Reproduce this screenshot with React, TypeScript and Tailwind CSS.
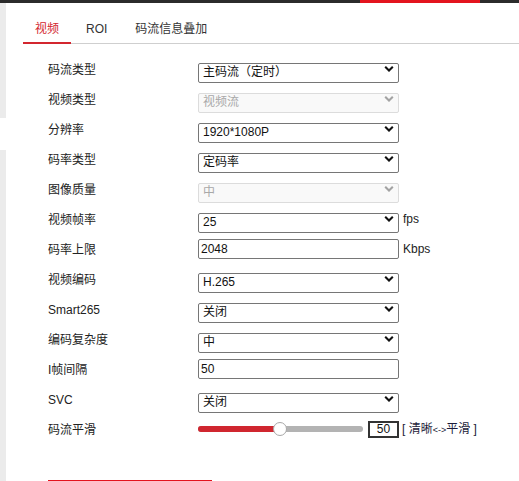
import React, { useState } from 'react';

const FONT = "font-['Liberation_Sans','Noto_Sans_CJK_SC',sans-serif]";

function Chevron({ muted }: { muted?: boolean }) {
  return (
    <svg
      width="10"
      height="7"
      viewBox="0 0 10 7"
      className="pointer-events-none absolute right-[5px] top-1/2 -translate-y-1/2"
    >
      <path
        d="M1.2 1.3 L5 5 L8.8 1.3"
        fill="none"
        stroke={muted ? '#a3a3a3' : '#111'}
        strokeWidth="2.1"
      />
    </svg>
  );
}

function Select({ value, options, disabled }: { value: string; options?: string[]; disabled?: boolean }) {
  const [val, setVal] = useState(value);
  const opts = options ?? [value];
  return (
    <div className="relative w-[201px] h-[20px]">
      <select
        disabled={disabled}
        value={val}
        onChange={(e) => setVal(e.target.value)}
        className={`appearance-none w-full h-full rounded-[2px] border pl-[4px] pr-[18px] pb-[2px] text-[12px] leading-[16px] outline-none ${
          disabled
            ? 'border-[#dcdcdc] bg-[#f9f9f9] text-[#a8a8a8]'
            : 'border-[#767676] bg-white text-[#111]'
        }`}
      >
        {opts.map((o) => (
          <option key={o} value={o}>
            {o}
          </option>
        ))}
      </select>
      <Chevron muted={disabled} />
    </div>
  );
}

function TextInput({ value }: { value: string }) {
  const [val, setVal] = useState(value);
  return (
    <input
      type="text"
      value={val}
      onChange={(e) => setVal(e.target.value)}
      className="w-[201px] h-[20px] rounded-[2px] border border-[#767676] bg-white pl-[2px] pb-[1px] text-[12px] text-[#111] outline-none"
    />
  );
}

function Row({ label, children }: { label: string; children: React.ReactNode }) {
  return (
    <div className="flex h-[30px] items-center">
      <div className="w-[150px] pt-[2px] text-[12px] leading-[16px] text-[#222]">{label}</div>
      <div className="flex items-center">{children}</div>
    </div>
  );
}

export default function App() {
  const [tab, setTab] = useState(0);
  const tabs = ['视频', 'ROI', '码流信息叠加'];

  return (
    <div className={`w-[519px] h-[481px] overflow-hidden bg-white ${FONT}`}>
      {/* top bar */}
      <div className="h-[3px] bg-[#2b2b2b]">
        <div className="ml-[360px] w-[120px] h-full bg-[#e3141e]" />
      </div>

      <div className="flex h-[478px]">
        {/* left edge */}
        <div className="w-[6px] flex flex-col">
          <div className="h-[115px] bg-[#ebebeb]" />
          <div className="h-[32px]" />
          <div className="flex-1 bg-[#ebebeb]" />
        </div>

        <div className="flex-1 pl-[17px]">
          {/* tabs */}
          <div className="mt-[16px] flex border-b border-[#cfcfcf]">
            {tabs.map((t, i) => (
              <button
                key={t}
                onClick={() => setTab(i)}
                className={`-mb-px flex h-[25px] items-start pt-[1px] text-[12px] leading-[18px] ${
                  i === 0 ? 'w-[48px] justify-center' : i === 1 ? 'ml-[15px]' : 'ml-[28px]'
                } ${
                  tab === i
                    ? 'border-b-2 border-[#d3262f] text-[#d3262f]'
                    : 'border-b-2 border-transparent text-[#333]'
                }`}
              >
                {t}
              </button>
            ))}
          </div>

          {/* form */}
          <div className="mt-[10px] pl-[25px]">
            <Row label="码流类型">
              <Select value="主码流（定时）" options={['主码流（定时）', '子码流', '第三码流']} />
            </Row>
            <Row label="视频类型">
              <Select value="视频流" disabled />
            </Row>
            <Row label="分辨率">
              <Select value="1920*1080P" options={['1920*1080P', '1280*720P']} />
            </Row>
            <Row label="码率类型">
              <Select value="定码率" options={['定码率', '变码率']} />
            </Row>
            <Row label="图像质量">
              <Select value="中" disabled />
            </Row>
            <Row label="视频帧率">
              <Select value="25" options={['25', '20', '15', '10']} />
              <span className="ml-[4px] text-[12px] text-[#222]">fps</span>
            </Row>
            <Row label="码率上限">
              <TextInput value="2048" />
              <span className="ml-[4px] text-[12px] text-[#222]">Kbps</span>
            </Row>
            <Row label="视频编码">
              <Select value="H.265" options={['H.265', 'H.264']} />
            </Row>
            <Row label="Smart265">
              <Select value="关闭" options={['关闭', '开启']} />
            </Row>
            <Row label="编码复杂度">
              <Select value="中" options={['低', '中', '高']} />
            </Row>
            <Row label="I帧间隔">
              <TextInput value="50" />
            </Row>
            <Row label="SVC">
              <Select value="关闭" options={['关闭', '开启']} />
            </Row>
            <Row label="码流平滑">
              <div className="relative w-[165px] h-[6px] rounded-full bg-[#b3b3b3]">
                <div className="w-[82px] h-full rounded-full bg-[#d0262f]" />
                <div className="absolute left-[75px] top-1/2 -translate-y-1/2 w-[14px] h-[14px] rounded-full border border-[#a8a8a8] bg-white" />
              </div>
              <div className="ml-[5px] w-[31px] h-[17px] border-2 border-[#333] text-center text-[12px] leading-[13px] text-[#111]">
                50
              </div>
              <span className="ml-[3px] text-[12px] text-[#1c1c3a]">
                [ 清晰<span className="text-[9px]">&lt;-&gt;</span>平滑 ]
              </span>
            </Row>

            <button aria-label="保存" className="mt-[36px] block w-[164px] h-[30px] bg-[#e3141e]" />
          </div>
        </div>
      </div>
    </div>
  );
}
